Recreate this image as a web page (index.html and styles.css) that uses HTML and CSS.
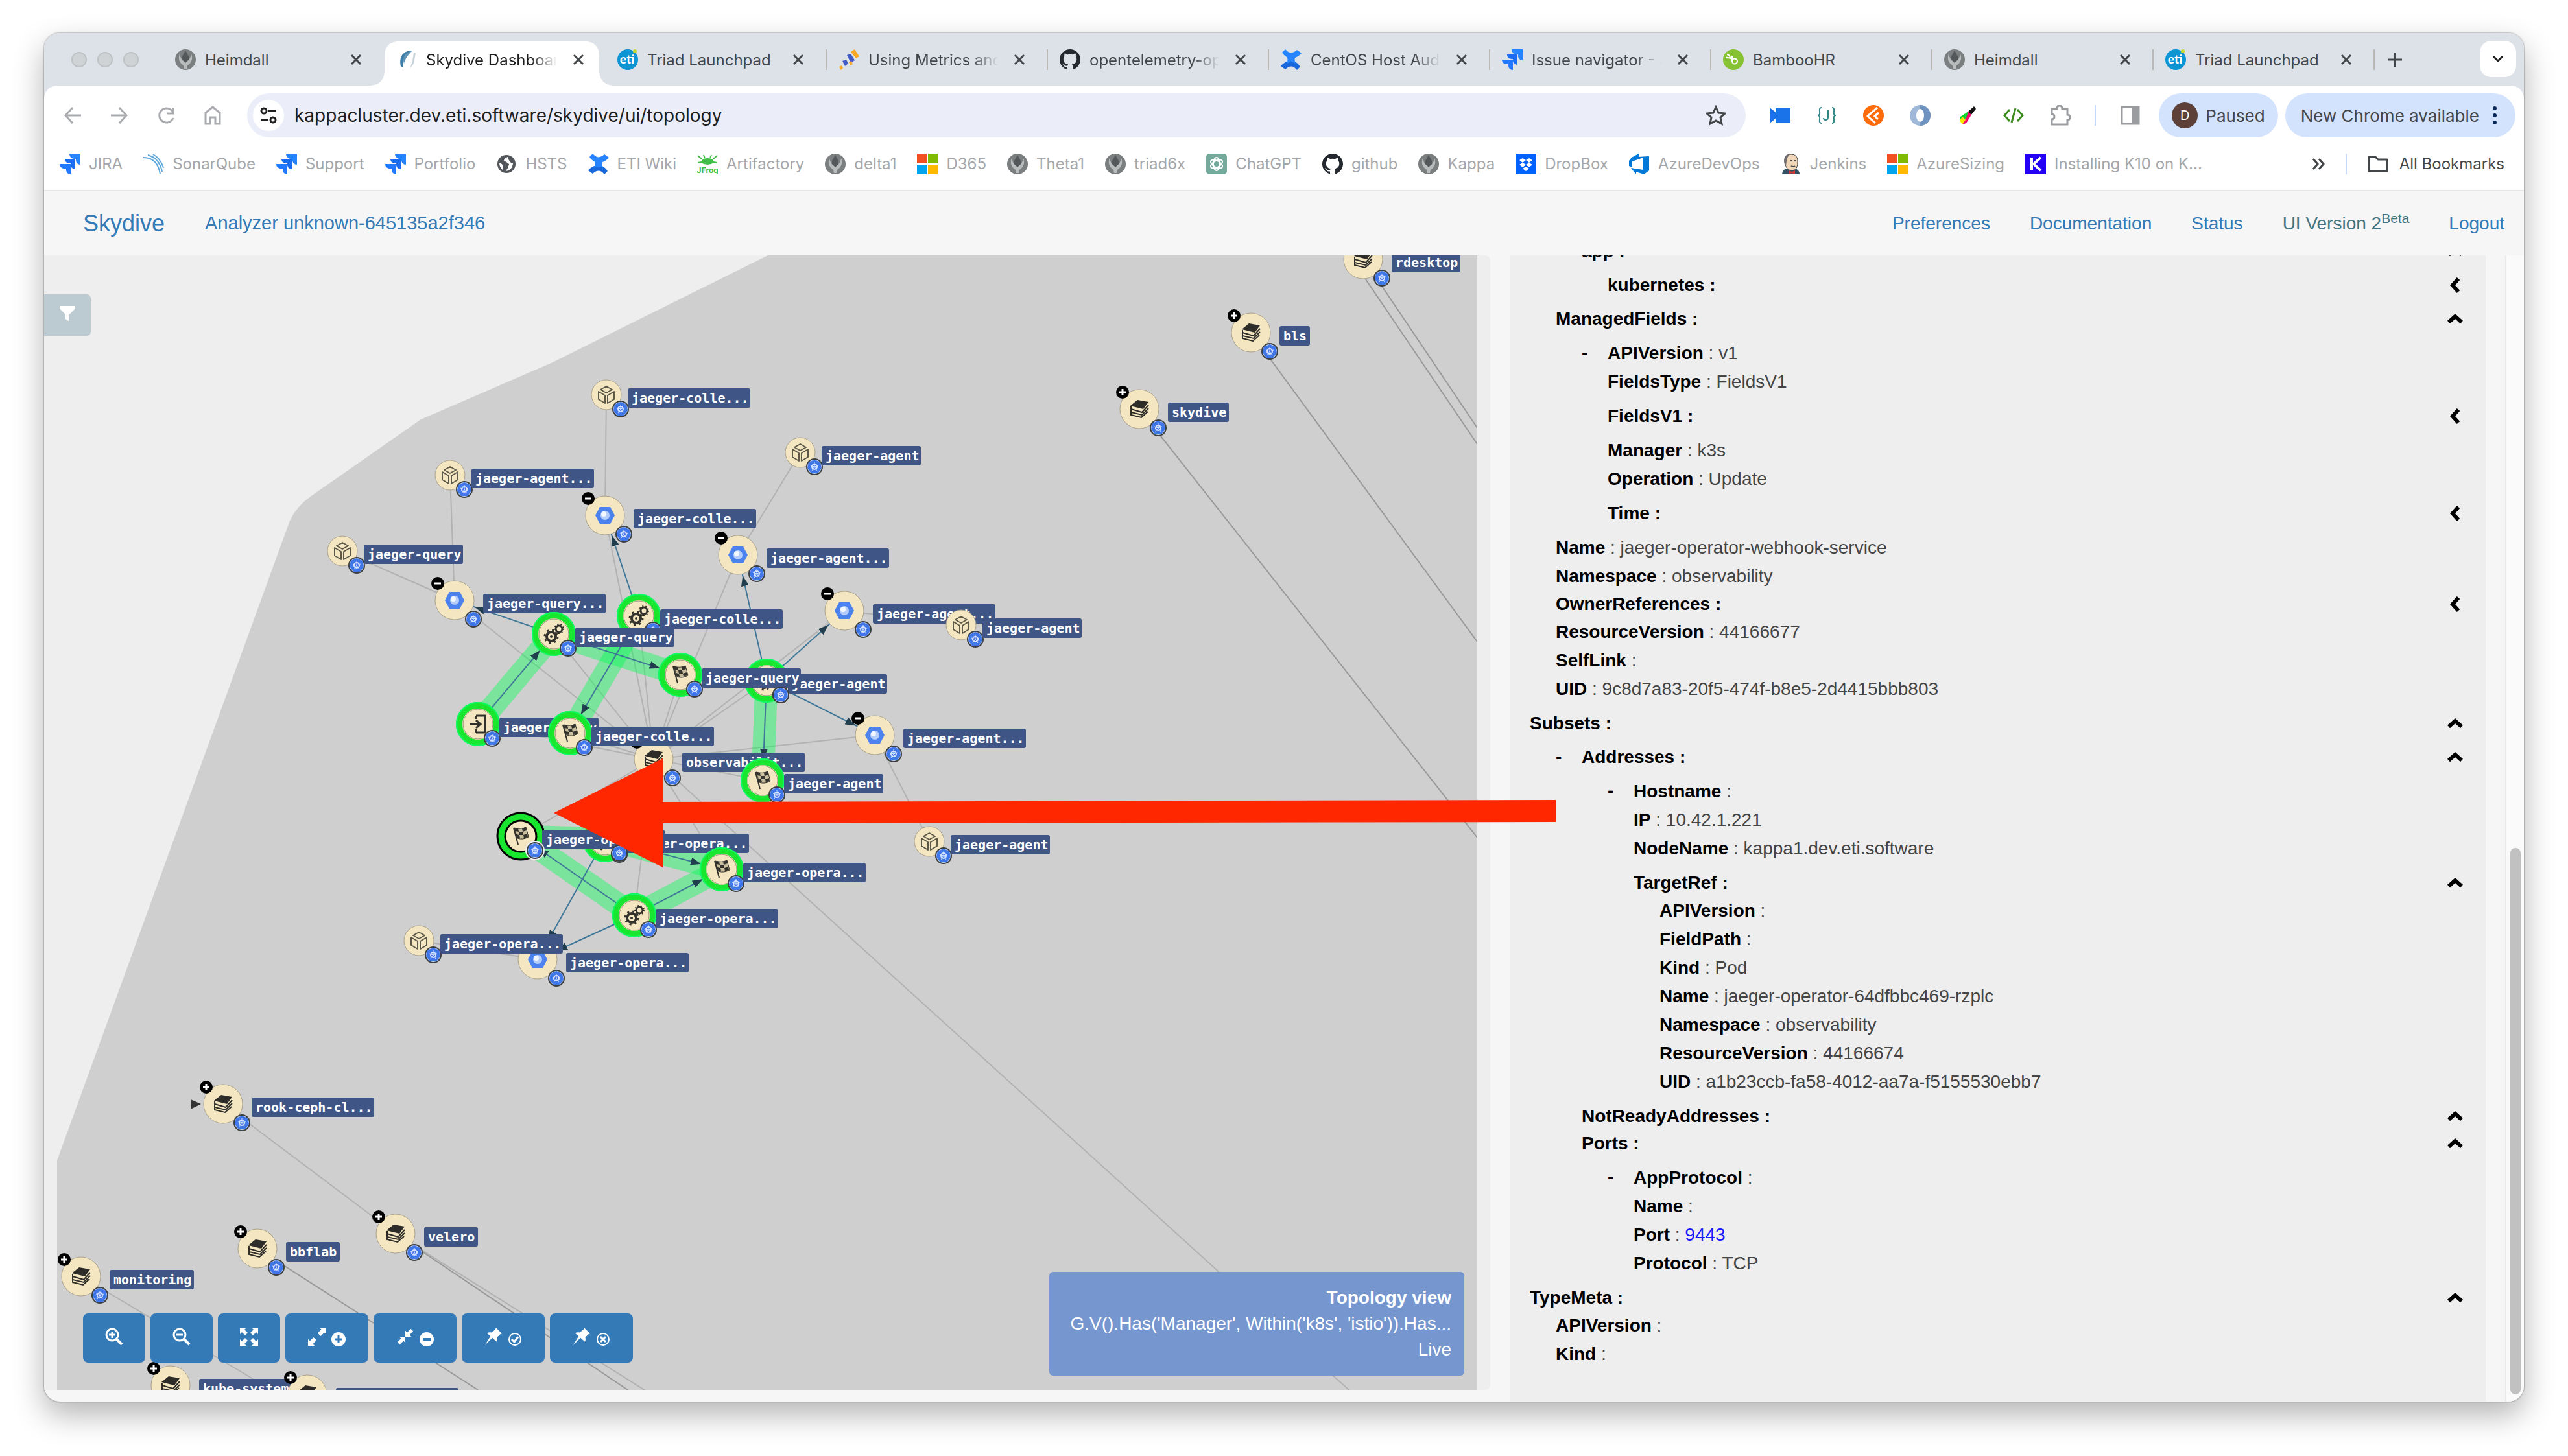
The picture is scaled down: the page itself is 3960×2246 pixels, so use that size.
FILE: index.html
```html
<!DOCTYPE html>
<html lang="en">
<head>
<meta charset="utf-8">
<title>Skydive Dashboard</title>
<link rel="stylesheet" href="styles.css">
</head>
<body>
<svg class="defs" aria-hidden="true">
  <defs>
    <symbol id="i-shield" viewBox="0 0 32 32"><circle cx="16" cy="16" r="16" fill="#7c7f80"/><path d="M16 2l5 9v6l-5 6-5-6v-6z" fill="#54585a"/><path d="M7 7c-3 8 0 14 6 18l1 5h4l1-5c6-4 9-10 6-18-1 6-3 9-6 11l-3 3-3-3c-3-2-5-5-6-11z" fill="#b9bcbd"/></symbol>
    <symbol id="i-jira" viewBox="0 0 32 32"><path d="M15 0h17v17c-4 0-7-3-7-7V8h-3c-4 0-7-4-7-8z" fill="#2684ff"/><path d="M8 8h16v16c-4 0-7-3-7-7v-2h-2c-4 0-7-3-7-7z" fill="#1a6cf0"/><path d="M0 16h17v16c-4 0-7-3-7-7v-2H7c-4 0-7-3-7-7z" fill="#1f78ff"/></symbol>
    <symbol id="i-conf" viewBox="0 0 32 32"><path d="M2 5l5-5c6 7 11 7 18 1l7 5C22 17 10 17 2 5z" fill="#2684ff"/><path d="M30 27l-5 5c-6-7-11-7-18-1l-7-5C10 15 22 15 30 27z" fill="#1868db"/><path d="M9 10q7 4 14 0-3 6 0 12-7-4-14 0 3-6 0-12z" fill="#2684ff"/></symbol>
    <symbol id="i-eti" viewBox="0 0 32 32"><circle cx="16" cy="16" r="16" fill="#0b95d3"/><circle cx="27" cy="3" r="3" fill="#c4d82e"/><text x="15" y="22" text-anchor="middle" font-family="Lato, sans-serif" font-weight="700" font-size="19" fill="#fff">eti</text></symbol>
    <symbol id="i-github" viewBox="0 0 16 16"><path fill="#24292f" d="M8 0C3.58 0 0 3.58 0 8c0 3.54 2.29 6.53 5.47 7.59.4.07.55-.17.55-.38v-1.49c-2.01.37-2.53-.49-2.69-.94-.09-.23-.48-.94-.82-1.13-.28-.15-.68-.52-.01-.53.63-.01 1.08.58 1.23.82.72 1.21 1.87.87 2.33.66.07-.52.28-.87.51-1.07-1.78-.2-3.64-.89-3.64-3.95 0-.87.31-1.59.82-2.15-.08-.2-.36-1.02.08-2.12 0 0 .67-.21 2.2.82a7.6 7.6 0 014 0c1.53-1.04 2.2-.82 2.2-.82.44 1.1.16 1.92.08 2.12.51.56.82 1.27.82 2.15 0 3.07-1.87 3.75-3.65 3.95.29.25.54.73.54 1.48v2.2c0 .21.15.46.55.38A8 8 0 0016 8c0-4.42-3.58-8-8-8z"/></symbol>
    <symbol id="i-ms" viewBox="0 0 32 32"><path fill="#f25022" d="M0 0h15v15H0z"/><path fill="#7fba00" d="M17 0h15v15H17z"/><path fill="#00a4ef" d="M0 17h15v15H0z"/><path fill="#ffb900" d="M17 17h15v15H17z"/></symbol>
    <symbol id="i-close" viewBox="0 0 18 18"><path d="M2 2l14 14M16 2L2 16" stroke="#44474a" stroke-width="3" fill="none"/></symbol>
    <symbol id="i-chev" viewBox="0 0 26 18"><path d="M3 14L13 5l10 9" fill="none" stroke="#000" stroke-width="6"/></symbol>

    <g id="badge"><circle r="13" fill="#3c4043"/><circle r="11" fill="#c6d4f5"/><path d="M0-11L9-7 11 2 5 10h-10l-6-8 2-9z" fill="#3f76e8"/><circle r="4" fill="none" stroke="#d5e1ff" stroke-width="2"/><path d="M0-7V0M-6-2L0 0 6-2M-4 6L0 0 4 6" fill="none" stroke="#d5e1ff" stroke-width="1"/></g>
    <g id="disc"><circle r="30" fill="#f3e6c0" stroke="#a9a18b" stroke-width="1"/></g>
    <g id="minus"><circle cx="-26" cy="-26" r="10"/><path d="M-31-26h10" stroke="#fff" stroke-width="3"/></g>
    <g id="plus"><circle cx="-26" cy="-26" r="10"/><path d="M-31-26h10M-26-31v10" stroke="#fff" stroke-width="3"/></g>
    <g id="pod"><circle r="23" fill="#f3e6c0" stroke="#a9a18b" stroke-width="1"/><path d="M0-13l9 5-9 5-9-5zM-12-5l10 6v12l-10-6zM12-5L2 1v12l10-6z" fill="none" stroke="#5d5949" stroke-width="2" stroke-linejoin="round"/><use href="#badge" x="22" y="22"/></g>
    <g id="deploy"><use href="#disc"/><path d="M-8-13H8l7 13-7 13H-8l-7-13z" fill="#4b82ee"/><circle r="7" fill="#b5cdfb"/><circle cx="-2" cy="-2" r="4" fill="#f2f7ff"/><use href="#minus"/><use href="#badge" x="29" y="29"/></g>
    <g id="layers"><path d="M-3-14l17 3-8 11-20-5z" fill="#2d2c28"/><path d="M-13-4l0 4 17 5 10-11M-13 1l0 4 17 4 10-10M-13 6l0 3 16 4 10-9" fill="none" stroke="#2d2c28" stroke-width="2"/></g>
    <g id="ns"><use href="#disc"/><use href="#layers"/><use href="#plus"/><use href="#badge" x="29" y="29"/></g>
    <g id="ring"><circle r="29" fill="#f3e6c0" stroke="#19e62f" stroke-width="10"/><circle r="33" fill="none" stroke="#0dfb63" stroke-width="2"/><circle r="23" fill="none" stroke="#9a9478" stroke-width="1"/></g>
    <g id="gears"><use href="#ring"/><g fill="none" stroke="#33322c"><circle cx="-4" cy="4" r="7" stroke-width="4"/><circle cx="-4" cy="4" r="10" stroke-width="3" stroke-dasharray="3 5"/><circle cx="8" cy="-8" r="5" stroke-width="3"/><circle cx="8" cy="-8" r="7" stroke-width="2" stroke-dasharray="2 3"/></g><circle cx="-4" cy="4" r="2" fill="#33322c"/><use href="#badge" x="22" y="22"/></g>
    <g id="checks"><path d="M-11-13l7 26" stroke="#33322c" stroke-width="2"/><path d="M-10-13q10 3 18-1l4 15q-9 5-17 2z" fill="#c9bf9f" stroke="#33322c" stroke-width="1"/><path d="M-10-13l6 1 1 5-6-1zM2-12l6-2 1 5-6 2zM-3-7l6 0 1 5-6 0zM-7-3l5 1 1 5-6-1zM4-2l6-2 1 5-6 2z" fill="#33322c"/></g>
    <g id="flag"><use href="#ring"/><use href="#checks"/><use href="#badge" x="22" y="22"/></g>
    <g id="flagsel"><circle r="30" fill="#f3e6c0" stroke="#19e62f" stroke-width="12"/><circle r="36" fill="none" stroke="#000" stroke-width="3"/><circle r="24" fill="none" stroke="#000" stroke-width="3"/><use href="#checks"/></g>
    <g id="login"><use href="#ring"/><path d="M-3-13H11V13H-3M-3-13v5M-3 13v-5M-12 0H3M-3-6l7 6-7 6" fill="none" stroke="#33322c" stroke-width="3"/><use href="#badge" x="22" y="22"/></g>
    <marker id="arrow" markerUnits="userSpaceOnUse" markerWidth="60" markerHeight="12" refX="49" refY="6" orient="auto"><path d="M0 0l16 6-16 6z" fill="#1f3d4d"/></marker>
    <clipPath id="canvas"><rect x="88" y="394" width="2190" height="1750"/></clipPath>
  </defs>
</svg>

<div class="window">
  <header class="chrome">
    <div class="strip">
      <div class="lights"><span></span><span></span><span></span></div>
      <nav class="tabs" aria-label="Tabs">
        <div class="tab"><svg class="fav"><use href="#i-shield"/></svg><span class="tab-title">Heimdall</span><button class="close" aria-label="Close"><svg><use href="#i-close"/></svg></button></div>
        <div class="tab tab-active"><svg class="fav" viewBox="0 0 32 32"><path d="M25 2C10 2 4 12 7 26l4 3c-2-9 1-19 14-27z" fill="#3f7ea8"/><path d="M25 2C14 4 9 13 12 22c2-8 6-13 13-20z" fill="#5e93b6"/><path d="M27 5l3 1-3 16-6 8c3-8 5-15 6-25z" fill="#c9d3da"/></svg><span class="tab-title fade">Skydive Dashboard</span><button class="close" aria-label="Close"><svg><use href="#i-close"/></svg></button></div>
        <div class="tab divided"><svg class="fav"><use href="#i-eti"/></svg><span class="tab-title">Triad Launchpad</span><button class="close" aria-label="Close"><svg><use href="#i-close"/></svg></button></div>
        <div class="tab divided"><svg class="fav" viewBox="0 0 32 32"><path d="M19 4l6-4 7 11-5 3z" fill="#f9a825"/><path d="M13 9l6-2 6 10-6 4zM6 18l6-2 3 6-5 4z" fill="#425cc7"/><path d="M16 20l4-2 2 5-4 2zM1 27l4-2 2 4-3 3z" fill="#f9a825"/></svg><span class="tab-title fade">Using Metrics and Traces</span><button class="close" aria-label="Close"><svg><use href="#i-close"/></svg></button></div>
        <div class="tab divided"><svg class="fav"><use href="#i-github"/></svg><span class="tab-title fade">opentelemetry-operator</span><button class="close" aria-label="Close"><svg><use href="#i-close"/></svg></button></div>
        <div class="tab divided"><svg class="fav"><use href="#i-conf"/></svg><span class="tab-title fade">CentOS Host Audit</span><button class="close" aria-label="Close"><svg><use href="#i-close"/></svg></button></div>
        <div class="tab divided"><svg class="fav"><use href="#i-jira"/></svg><span class="tab-title fade">Issue navigator - Jira</span><button class="close" aria-label="Close"><svg><use href="#i-close"/></svg></button></div>
        <div class="tab divided"><svg class="fav" viewBox="0 0 32 32"><circle cx="16" cy="16" r="16" fill="#86c232"/><path d="M14 10v9M14 19a4 4 0 108-1 4 4 0 00-8 1M6 8q5 0 5 7M10 13q-4 1-5-1" fill="none" stroke="#fff" stroke-width="2"/></svg><span class="tab-title">BambooHR</span><button class="close" aria-label="Close"><svg><use href="#i-close"/></svg></button></div>
        <div class="tab divided"><svg class="fav"><use href="#i-shield"/></svg><span class="tab-title">Heimdall</span><button class="close" aria-label="Close"><svg><use href="#i-close"/></svg></button></div>
        <div class="tab divided"><svg class="fav"><use href="#i-eti"/></svg><span class="tab-title">Triad Launchpad</span><button class="close" aria-label="Close"><svg><use href="#i-close"/></svg></button></div>
      </nav>
      <button class="newtab" aria-label="New tab"><svg viewBox="0 0 22 22"><path d="M11 0v22M0 11h22" stroke="#44474a" stroke-width="3"/></svg></button>
      <button class="tabsearch" aria-label="Search tabs"><svg viewBox="0 0 18 12"><path d="M2 2l7 7 7-7" fill="none" stroke="#1f1f1f" stroke-width="3"/></svg></button>
    </div>

    <div class="bars">
      <div class="toolbar">
        <div class="icons">
          <button class="ico" aria-label="Back"><svg viewBox="0 0 32 32"><path d="M29 16H5M16 4L5 16l11 12" fill="none" stroke="#a9abae" stroke-width="3"/></svg></button>
          <button class="ico" aria-label="Forward"><svg viewBox="0 0 32 32"><path d="M3 16h24M16 4l11 12-11 12" fill="none" stroke="#a9abae" stroke-width="3"/></svg></button>
          <button class="ico" aria-label="Reload"><svg viewBox="0 0 32 32"><path d="M27 12A11 11 0 1027 20M27 4v9h-9" fill="none" stroke="#a9abae" stroke-width="3"/></svg></button>
          <button class="ico" aria-label="Home"><svg viewBox="0 0 32 32"><path d="M5 12L16 3l11 9v17h-7V19h-8v10H5z" fill="none" stroke="#a9abae" stroke-width="3"/></svg></button>
        </div>
        <div class="omnibox">
          <button class="siteinfo" aria-label="Site information"><svg viewBox="0 0 28 28"><g fill="none" stroke="#1f1f1f" stroke-width="3"><circle cx="7" cy="7" r="4"/><path d="M14 7h12M2 21h12"/><circle cx="21" cy="21" r="4"/></g></svg></button>
          <input class="url" type="text" aria-label="Address" value="kappacluster.dev.eti.software/skydive/ui/topology">
          <button class="ico" aria-label="Bookmark"><svg viewBox="0 0 32 32"><path d="M16 3l4 9 10 1-7 6 2 10-9-5-9 5 2-10-7-6 10-1z" fill="none" stroke="#44474a" stroke-width="3"/></svg></button>
        </div>
        <div class="icons">
          <button class="ico" aria-label="Recorder"><svg viewBox="0 0 32 32"><path d="M0 4l9 7V5h23v22H9v-6l-9 7z" fill="#1a73e8"/></svg></button>
          <button class="ico" aria-label="JSON"><svg viewBox="0 0 32 32"><path d="M8 4Q4 4 5 10t-3 6q4 0 3 6t3 6M24 4q4 0 3 6t3 6q-4 0-3 6t-3 6M18 8v11q0 4-4 4-3 0-3-3" fill="none" stroke="#2f8585" stroke-width="2"/></svg></button>
          <button class="ico" aria-label="Postman"><svg viewBox="0 0 32 32"><circle cx="16" cy="16" r="16" fill="#ff6c0c"/><path d="M22 4L7 17l12 11M24 12l-6 5 5 5" fill="none" stroke="#fff" stroke-width="3"/></svg></button>
          <button class="ico" aria-label="Octo"><svg viewBox="0 0 32 32"><circle cx="16" cy="16" r="16" fill="#9fb8d8"/><path d="M16 0a16 16 0 010 32z" fill="#6f93c0"/><ellipse cx="16" cy="16" rx="6" ry="10" fill="#fff"/></svg></button>
          <button class="ico" aria-label="Color picker"><svg viewBox="0 0 32 32"><path d="M27 2l3 4-8 10-6-4z" fill="#111"/><path d="M18 10l5 5-8 13-6 2z" fill="#f30a6a"/><path d="M18 10L6 18l-1 6 10-4z" fill="#0bd22c"/><path d="M5 24l4-6 5 5-5 7z" fill="#ffe600"/></svg></button>
          <button class="ico" aria-label="Code"><svg viewBox="0 0 32 32"><path d="M10 7l-8 9 8 9M22 7l8 9-8 9M19 5l-6 22" fill="none" stroke="#3a8a1d" stroke-width="3"/></svg></button>
          <button class="ico" aria-label="Extensions"><svg viewBox="0 0 32 32"><path d="M3 6h8q0-5 4-5t4 5h8v9q4 0 4 4t-4 4v7H3v-8q4 0 4-4t-4-4z" fill="none" stroke="#9a9c9f" stroke-width="3"/></svg></button>
        </div>
        <span class="vsep"></span>
        <button class="ico" aria-label="Side panel"><svg viewBox="0 0 32 32"><path d="M3 3h26v26H3z" fill="none" stroke="#9a9c9f" stroke-width="3"/><path d="M19 3h11v26H19z" fill="#9a9c9f"/></svg></button>
        <div class="pills">
          <button class="pill"><span class="avatar">D</span>Paused</button>
          <button class="pill pill-wide">New Chrome available<svg class="dots" viewBox="0 0 8 32"><circle cx="4" cy="5" r="3"/><circle cx="4" cy="16" r="3"/><circle cx="4" cy="27" r="3"/></svg></button>
        </div>
      </div>
      <nav class="bookmarks" aria-label="Bookmarks">
        <a href="#"><svg><use href="#i-jira"/></svg>JIRA</a>
        <a href="#"><svg viewBox="0 0 32 32"><path d="M0 6q22 0 26 26M7 2q18 5 22 26M15 1q12 7 16 21" fill="none" stroke="#5ba7dc" stroke-width="2"/></svg>SonarQube</a>
        <a href="#"><svg><use href="#i-jira"/></svg>Support</a>
        <a href="#"><svg><use href="#i-jira"/></svg>Portfolio</a>
        <a href="#"><svg viewBox="0 0 32 32"><circle cx="16" cy="16" r="14" fill="#53575b"/><path d="M18 5q-6 2-6 6 5 2 8 5-1 6-5 11 10-1 11-12-3 0-5-3t-3-7zM5 14q4 1 6 5-1 3-1 6-5-4-5-11z" fill="#fff"/></svg>HSTS</a>
        <a href="#"><svg><use href="#i-conf"/></svg>ETI Wiki</a>
        <a href="#"><svg viewBox="0 0 32 32"><path d="M1 3l6 5M31 3l-6 5M10 2l2 5M22 2l-2 5M1 14l6-1M31 14l-6-1" stroke="#40be46" stroke-width="2"/><path d="M6 14q0-7 10-7t10 7q-10 6-20 0z" fill="#40be46"/><text x="16" y="30" text-anchor="middle" font-family="Roboto, sans-serif" font-weight="700" font-size="13" fill="#40be46">JFrog</text></svg>Artifactory</a>
        <a href="#"><svg><use href="#i-shield"/></svg>delta1</a>
        <a href="#"><svg><use href="#i-ms"/></svg>D365</a>
        <a href="#"><svg><use href="#i-shield"/></svg>Theta1</a>
        <a href="#"><svg><use href="#i-shield"/></svg>triad6x</a>
        <a href="#"><svg viewBox="0 0 32 32"><rect width="32" height="32" rx="5" fill="#74aa9c"/><g fill="none" stroke="#fff" stroke-width="2"><ellipse cx="16" cy="16" rx="5" ry="10"/><ellipse cx="16" cy="16" rx="5" ry="10" transform="rotate(60 16 16)"/><ellipse cx="16" cy="16" rx="5" ry="10" transform="rotate(120 16 16)"/></g></svg>ChatGPT</a>
        <a href="#"><svg><use href="#i-github"/></svg>github</a>
        <a href="#"><svg><use href="#i-shield"/></svg>Kappa</a>
        <a href="#"><svg viewBox="0 0 32 32"><path d="M0 0h32v32H0z" fill="#0061fe"/><path d="M11 7l5 3-5 4-5-4zM21 7l5 3-5 4-5-4zM11 14l5 3-5 4-5-4zM21 14l5 3-5 4-5-4zM16 20l5 3-5 4-5-4z" fill="#fff"/></svg>DropBox</a>
        <a href="#"><svg viewBox="0 0 32 32"><path d="M0 11l4-5 11-6v5l16-1v22l-8 6-12-4v4L3 22l19 3V6L5 12v9l-5-2z" fill="#0078d7"/></svg>AzureDevOps</a>
        <a href="#"><svg viewBox="0 0 32 32"><path d="M2 32q0-8 8-9h12q7 2 7 9z" fill="#335061"/><path d="M6 11q0-10 10-10t10 10q1 15-9 15T6 11z" fill="#f0d6b7" stroke="#4a4a4a" stroke-width="1"/><path d="M5 12Q5 0 16 0q-6 3-7 11l-1 8q-3-3-3-7z" fill="#6d6b6d"/><path d="M13 26l4 2 5-2v6l-5-2-4 2z" fill="#d33833"/><path d="M15 11h3M21 11h3M16 19q4 2 6 0" stroke="#4a4a4a" stroke-width="2" fill="none"/></svg>Jenkins</a>
        <a href="#"><svg><use href="#i-ms"/></svg>AzureSizing</a>
        <a href="#"><svg viewBox="0 0 32 32"><path d="M0 0h32v32H0z" fill="#2400f5"/><path d="M10 6v20M24 6L13 16l11 10" fill="none" stroke="#fff" stroke-width="4"/></svg>Installing K10 on K...</a>
        <span class="spacer"></span>
        <button class="more" aria-label="More bookmarks"><svg viewBox="0 0 20 18"><path d="M2 1l7 8-7 8M11 1l7 8-7 8" fill="none" stroke="#44474a" stroke-width="3"/></svg></button>
        <span class="vsep"></span>
        <a class="all" href="#"><svg viewBox="0 0 32 32"><path d="M2 5h10l4 4h14v18H2z" fill="none" stroke="#44474a" stroke-width="3" stroke-linejoin="round"/></svg>All Bookmarks</a>
      </nav>
    </div>
  </header>

  <header class="appbar">
    <a class="brand" href="#">Skydive</a>
    <a class="analyzer" href="#">Analyzer unknown-645135a2f346</a>
    <nav class="menu" aria-label="Main">
      <a href="#">Preferences</a>
      <a href="#">Documentation</a>
      <a href="#">Status</a>
      <a class="beta" href="#">UI Version 2<sup>Beta</sup></a>
      <a href="#">Logout</a>
    </nav>
  </header>

  <main class="content">
    <section class="graph" aria-label="Topology">
      <svg class="canvas" viewBox="68 394 2230 1750" preserveAspectRatio="xMinYMin slice">
        <g clip-path="url(#canvas)">
          <path d="M1184 394L850 560 649 647 480 765Q458 780 447 803L88 1790V2144H2278V394Z" fill="#cfcfcf"/>
          <g class="far">
            <path d="M1757 631L2278 1292M1929 513L2278 990M2106 431L2278 685M2130 440L2278 660M397 1926L737 2144M610 1903L968 2144"/>
          </g>
          <g class="near">
            <path d="M344 1703L610 1903L1000 2148M125 1969L390 2127M1008 1171L2080 2144"/>
            <path d="M935 609L933 795M694 733L701 926M528 850L701 926M1234 698L1138 856M1482 964L1302 942M1433 1298L1349 1134M646 1451L829 1480"/>
            <path d="M1008 1171L933 795M1008 1171L1138 856M1008 1171L701 926M1008 1171L854 978M1008 1171L985 950M1008 1171L1049 1041M1008 1171L1182 1050M1008 1171L1302 942M1008 1171L1349 1134M1008 1171L1176 1204M1008 1171L879 1131M1008 1171L737 1117M1008 1171L803 1290M1008 1171L933 1294M1008 1171L1113 1341M1008 1171L978 1412"/>
          </g>
          <path d="M294 1696l16 7-16 8z" fill="#333"/>
          <g class="band">
            <path d="M737 1117L854 978"/><path d="M854 978L1049 1041"/><path d="M985 950L879 1131"/><path d="M1182 1050L1176 1204"/>
            <path d="M978 1412L803 1290"/><path d="M978 1412L1113 1341"/><path d="M933 1294L1113 1341"/><path d="M803 1290L933 1294"/>
          </g>
          <g class="link">
            <path d="M854 978L701 926"/><path d="M737 1117L854 978"/><path d="M854 978L1049 1041"/><path d="M985 950L933 795"/><path d="M985 950L879 1131"/>
            <path d="M1182 1050L1138 856"/><path d="M1182 1050L1302 942"/><path d="M1182 1050L1349 1134"/><path d="M1182 1050L1176 1204"/>
            <path d="M978 1412L803 1290"/><path d="M978 1412L1113 1341"/><path d="M933 1294L1113 1341"/><path d="M933 1294L829 1480"/><path d="M978 1412L829 1480"/>
          </g>
          <g class="nodes">
            <g transform="translate(2102 400)"><use href="#ns"/><rect x="44" y="-10" width="106" height="30" rx="3"/><text x="50" y="12">rdesktop</text></g>
            <g transform="translate(1929 513)"><use href="#ns"/><rect x="44" y="-10" width="47" height="30" rx="3"/><text x="50" y="12">bls</text></g>
            <g transform="translate(1757 631)"><use href="#ns"/><rect x="44" y="-10" width="94" height="30" rx="3"/><text x="50" y="12">skydive</text></g>
            <g transform="translate(344 1703)"><use href="#ns"/><rect x="44" y="-10" width="189" height="30" rx="3"/><text x="50" y="12">rook-ceph-cl...</text></g>
            <g transform="translate(610 1903)"><use href="#ns"/><rect x="44" y="-10" width="83" height="30" rx="3"/><text x="50" y="12">velero</text></g>
            <g transform="translate(397 1926)"><use href="#ns"/><rect x="44" y="-10" width="83" height="30" rx="3"/><text x="50" y="12">bbflab</text></g>
            <g transform="translate(125 1969)"><use href="#ns"/><rect x="44" y="-10" width="130" height="30" rx="3"/><text x="50" y="12">monitoring</text></g>
            <g transform="translate(263 2137)"><use href="#ns"/><rect x="44" y="-10" width="142" height="30" rx="3"/><text x="50" y="12">kube-system</text></g>
            <g transform="translate(474 2151)"><use href="#ns"/><rect x="44" y="-10" width="189" height="30" rx="3"/></g>
            <g transform="translate(935 609)"><use href="#pod"/><rect x="33" y="-10" width="189" height="30" rx="3"/><text x="39" y="12">jaeger-colle...</text></g>
            <g transform="translate(694 733)"><use href="#pod"/><rect x="33" y="-10" width="189" height="30" rx="3"/><text x="39" y="12">jaeger-agent...</text></g>
            <g transform="translate(528 850)"><use href="#pod"/><rect x="33" y="-10" width="153" height="30" rx="3"/><text x="39" y="12">jaeger-query</text></g>
            <g transform="translate(1234 698)"><use href="#pod"/><rect x="33" y="-10" width="153" height="30" rx="3"/><text x="39" y="12">jaeger-agent</text></g>
            <g transform="translate(1433 1298)"><use href="#pod"/><rect x="33" y="-10" width="153" height="30" rx="3"/><text x="39" y="12">jaeger-agent</text></g>
            <g transform="translate(933 795)"><use href="#deploy"/><rect x="44" y="-10" width="189" height="30" rx="3"/><text x="50" y="12">jaeger-colle...</text></g>
            <g transform="translate(701 926)"><use href="#deploy"/><rect x="44" y="-10" width="189" height="30" rx="3"/><text x="50" y="12">jaeger-query...</text></g>
            <g transform="translate(1138 856)"><use href="#deploy"/><rect x="44" y="-10" width="189" height="30" rx="3"/><text x="50" y="12">jaeger-agent...</text></g>
            <g transform="translate(1302 942)"><use href="#deploy"/><rect x="44" y="-10" width="189" height="30" rx="3"/><text x="50" y="12">jaeger-agent...</text></g>
            <g transform="translate(1482 964)"><use href="#pod"/><rect x="33" y="-10" width="153" height="30" rx="3"/><text x="39" y="12">jaeger-agent</text></g>
            <g transform="translate(1349 1134)"><use href="#deploy"/><rect x="44" y="-10" width="189" height="30" rx="3"/><text x="50" y="12">jaeger-agent...</text></g>
            <g transform="translate(829 1480)"><use href="#deploy"/><rect x="44" y="-10" width="189" height="30" rx="3"/><text x="50" y="12">jaeger-opera...</text></g>
            <g transform="translate(646 1451)"><use href="#pod"/><rect x="33" y="-10" width="189" height="30" rx="3"/><text x="39" y="12">jaeger-opera...</text></g>
            <g transform="translate(1008 1171)"><use href="#disc"/><use href="#layers"/><use href="#minus"/><use href="#badge" x="29" y="29"/><rect x="44" y="-10" width="189" height="30" rx="3"/><text x="50" y="12">observabilit...</text></g>
            <g transform="translate(737 1117)"><use href="#login"/><rect x="33" y="-10" width="153" height="30" rx="3"/><text x="39" y="12">jaeger-query</text></g>
            <g transform="translate(879 1131)"><use href="#flag"/><rect x="33" y="-10" width="189" height="30" rx="3"/><text x="39" y="12">jaeger-colle...</text></g>
            <g transform="translate(985 950)"><use href="#gears"/><rect x="33" y="-10" width="189" height="30" rx="3"/><text x="39" y="12">jaeger-colle...</text></g>
            <g transform="translate(854 978)"><use href="#gears"/><rect x="33" y="-10" width="153" height="30" rx="3"/><text x="39" y="12">jaeger-query</text></g>
            <g transform="translate(1182 1050)"><use href="#gears"/><rect x="33" y="-10" width="153" height="30" rx="3"/><text x="39" y="12">jaeger-agent</text></g>
            <g transform="translate(1049 1041)"><use href="#flag"/><rect x="33" y="-10" width="153" height="30" rx="3"/><text x="39" y="12">jaeger-query</text></g>
            <use href="#badge" x="1204" y="1072"/>
            <g transform="translate(1176 1204)"><use href="#flag"/><rect x="33" y="-10" width="153" height="30" rx="3"/><text x="39" y="12">jaeger-agent</text></g>
            <g transform="translate(933 1296)"><use href="#gears"/><rect x="33" y="-10" width="189" height="30" rx="3"/><text x="39" y="12">jaeger-opera...</text></g>
            <g transform="translate(803 1290)"><use href="#flagsel"/><rect x="33" y="-10" width="189" height="30" rx="3"/><text x="39" y="12">jaeger-opera...</text><circle cx="22" cy="22" r="15" fill="#f0f0f0"/><use href="#badge" x="22" y="22"/></g>
            <use href="#badge" x="955" y="1316"/>
            <g transform="translate(1113 1341)"><use href="#flag"/><rect x="33" y="-10" width="189" height="30" rx="3"/><text x="39" y="12">jaeger-opera...</text></g>
            <g transform="translate(978 1412)"><use href="#gears"/><rect x="33" y="-10" width="189" height="30" rx="3"/><text x="39" y="12">jaeger-opera...</text></g>
          </g>
        </g>
      </svg>
      <button class="filter" aria-label="Filter"><svg viewBox="0 0 26 26"><path d="M1 1h24v4l-9 9v11l-6-4v-7L1 5z" fill="#fff"/></svg></button>
      <div class="tools">
        <button aria-label="Zoom in"><svg viewBox="0 0 28 28"><circle cx="11" cy="11" r="9" fill="none" stroke="#fff" stroke-width="3"/><path d="M11 6v10M6 11h10" stroke="#fff" stroke-width="3"/><path d="M18 18l8 8" stroke="#fff" stroke-width="4"/></svg></button>
        <button aria-label="Zoom out"><svg viewBox="0 0 28 28"><circle cx="11" cy="11" r="9" fill="none" stroke="#fff" stroke-width="3"/><path d="M6 11h10" stroke="#fff" stroke-width="3"/><path d="M18 18l8 8" stroke="#fff" stroke-width="4"/></svg></button>
        <button aria-label="Fit"><svg viewBox="0 0 28 28"><path d="M0 0h10L7 3l5 5-4 4-5-5-3 3zM28 0v10l-3-3-5 5-4-4 5-5-3-3zM0 28V18l3 3 5-5 4 4-5 5 3 3zM28 28H18l3-3-5-5 4-4 5 5 3-3z" fill="#fff"/></svg></button>
        <button class="wide" aria-label="Expand all"><svg viewBox="0 0 30 30"><path d="M30 0v11l-3-3-6 6-5-5 6-6-3-3zM0 30V19l3 3 6-6 5 5-6 6 3 3z" fill="#fff"/></svg><svg class="sub" viewBox="0 0 22 22"><circle cx="11" cy="11" r="11" fill="#fff"/><path d="M11 5v12M5 11h12" stroke="#337ab7" stroke-width="3"/></svg></button>
        <button class="wide" aria-label="Collapse all"><svg viewBox="0 0 30 30"><path d="M15 15V5l3 3 6-6 4 4-6 6 3 3zM15 15v10l-3-3-6 6-4-4 6-6-3-3z" fill="#fff"/></svg><svg class="sub" viewBox="0 0 22 22"><circle cx="11" cy="11" r="11" fill="#fff"/><path d="M5 11h12" stroke="#337ab7" stroke-width="4"/></svg></button>
        <button class="wide" aria-label="Pin"><svg viewBox="0 0 30 30"><path d="M19 0l10 10-3 1-5 5q1 5-1 7L13 17 1 29l9-15-6-5q3-2 8-1l6-5z" fill="#fff"/></svg><svg class="sub" viewBox="0 0 22 22"><circle cx="11" cy="11" r="9" fill="none" stroke="#fff" stroke-width="2"/><path d="M6 11l4 4 6-8" fill="none" stroke="#fff" stroke-width="3"/></svg></button>
        <button class="wide" aria-label="Unpin"><svg viewBox="0 0 30 30"><path d="M19 0l10 10-3 1-5 5q1 5-1 7L13 17 1 29l9-15-6-5q3-2 8-1l6-5z" fill="#fff"/></svg><svg class="sub" viewBox="0 0 22 22"><circle cx="11" cy="11" r="9" fill="none" stroke="#fff" stroke-width="2"/><path d="M7 7l8 8M15 7l-8 8" fill="none" stroke="#fff" stroke-width="3"/></svg></button>
      </div>
      <div class="info"><strong>Topology view</strong><span>G.V().Has('Manager', Within('k8s', 'istio')).Has...</span><span>Live</span></div>
    </section>

    <aside class="panel" aria-label="Node details">
      <div class="tree">
        <div class="nest">
          <div class="nest">
            <details open><summary>app :<svg><use href="#i-chev"/></svg></summary>
              <div class="nest"><details class="spaced"><summary>kubernetes :<svg><use href="#i-chev"/></svg></summary></details></div>
            </details>
          </div>
          <details class="spaced" open><summary>ManagedFields :<svg><use href="#i-chev"/></svg></summary>
            <div class="nest entry"><b class="dash">-</b><div class="grow">
              <p><b>APIVersion</b> : v1</p>
              <p><b>FieldsType</b> : FieldsV1</p>
              <details class="spaced"><summary>FieldsV1 :<svg><use href="#i-chev"/></svg></summary></details>
              <p class="spaced"><b>Manager</b> : k3s</p>
              <p><b>Operation</b> : Update</p>
              <details class="spaced"><summary>Time :<svg><use href="#i-chev"/></svg></summary></details>
            </div></div>
          </details>
          <p class="spaced"><b>Name</b> : jaeger-operator-webhook-service</p>
          <p><b>Namespace</b> : observability</p>
          <details><summary>OwnerReferences :<svg><use href="#i-chev"/></svg></summary></details>
          <p><b>ResourceVersion</b> : 44166677</p>
          <p><b>SelfLink</b> :</p>
          <p><b>UID</b> : 9c8d7a83-20f5-474f-b8e5-2d4415bbb803</p>
        </div>
        <details class="spaced" open><summary>Subsets :<svg><use href="#i-chev"/></svg></summary>
          <div class="entry"><b class="dash dash-outer">-</b><div class="grow">
            <details open><summary>Addresses :<svg><use href="#i-chev"/></svg></summary>
              <div class="entry"><b class="dash dash-outer">-</b><div class="grow">
                <p><b>Hostname</b> :</p>
                <p><b>IP</b> : 10.42.1.221</p>
                <p><b>NodeName</b> : kappa1.dev.eti.software</p>
                <details class="spaced" open><summary>TargetRef :<svg><use href="#i-chev"/></svg></summary>
                  <div class="nest">
                    <p><b>APIVersion</b> :</p>
                    <p><b>FieldPath</b> :</p>
                    <p><b>Kind</b> : Pod</p>
                    <p><b>Name</b> : jaeger-operator-64dfbbc469-rzplc</p>
                    <p><b>Namespace</b> : observability</p>
                    <p><b>ResourceVersion</b> : 44166674</p>
                    <p><b>UID</b> : a1b23ccb-fa58-4012-aa7a-f5155530ebb7</p>
                  </div>
                </details>
              </div></div>
            </details>
            <details class="spaced" open><summary>NotReadyAddresses :<svg><use href="#i-chev"/></svg></summary></details>
            <details open><summary>Ports :<svg><use href="#i-chev"/></svg></summary>
              <div class="entry"><b class="dash dash-outer">-</b><div class="grow">
                <p><b>AppProtocol</b> :</p>
                <p><b>Name</b> :</p>
                <p><b>Port</b> : <span class="num">9443</span></p>
                <p><b>Protocol</b> : TCP</p>
              </div></div>
            </details>
          </div></div>
        </details>
        <details class="spaced" open><summary>TypeMeta :<svg><use href="#i-chev"/></svg></summary>
          <div class="nest">
            <p><b>APIVersion</b> :</p>
            <p><b>Kind</b> :</p>
          </div>
        </details>
      </div>
    </aside>
    <div class="scroll"><span class="thumb"></span></div>

    <svg class="callout" viewBox="0 0 3824 1768" preserveAspectRatio="xMinYMin slice" aria-hidden="true"><path d="M786 860L954 776V843L2331 840V874L954 876V944Z" fill="#ff2700"/></svg>
  </main>
</div>
</body>
</html>
```
FILE: styles.css
```css
* { box-sizing: border-box; }
body {
  margin: 0;
  background: #fff;
  font-family: "Liberation Sans", Arial, sans-serif;
  font-size: 28px;
}
button { border: 0; padding: 0; margin: 0; background: none; font: inherit; color: inherit; }
a { text-decoration: none; color: inherit; }
svg { display: block; }
p { margin: 0; }
.defs { position: absolute; width: 0; height: 0; }

.window {
  display: flex;
  flex-direction: column;
  height: calc(100vh - 135px);
  margin: 51px 68px 84px;
  border-radius: 24px;
  overflow: hidden;
  background: #f6f6f6;
  box-shadow: 0 0 2px 1px rgba(0, 0, 0, .25), 0 20px 48px rgba(0, 0, 0, .3);
}

/* browser frame */
.chrome {
  flex: none;
  background: #dde1e8;
  font-family: Inter, Roboto, sans-serif;
  font-size: 24px;
  color: #44474a;
}
.strip { display: flex; height: 81px; padding: 0 12px 0 42px; }
.lights { display: flex; gap: 16px; width: 140px; align-items: center; }
.lights span { width: 24px; height: 24px; border-radius: 50%; background: #d0d3d5; border: 2px solid #bfc2c4; }
.tabs { display: flex; align-items: flex-end; }
.tab {
  position: relative;
  display: flex;
  align-items: center;
  width: 341px;
  height: 68px;
  padding: 0 33px 12px 20px;
}
.tab-active {
  width: 331px;
  margin: 0 8px 0 2px;
  padding: 0 23px 12px 18px;
  border-radius: 20px 20px 0 0;
  background: #fff;
  color: #1f1f1f;
}
.tab-active::before, .tab-active::after {
  content: "";
  position: absolute;
  bottom: 0;
  width: 20px;
  height: 20px;
}
.tab-active::before { left: -20px; background: radial-gradient(circle at 0 0, transparent 19px, #fff 20px); }
.tab-active::after { right: -20px; background: radial-gradient(circle at 100% 0, transparent 19px, #fff 20px); }
.divided::after {
  content: "";
  position: absolute;
  right: -2px;
  top: 12px;
  width: 2px;
  height: 32px;
  background: #b9b8b5;
}
.fav { flex: none; width: 32px; height: 32px; margin-right: 14px; }
.tab-title { flex: 1; overflow: hidden; white-space: nowrap; }
.fade { -webkit-mask-image: linear-gradient(90deg, #000 80%, transparent); mask-image: linear-gradient(90deg, #000 80%, transparent); }
.close { flex: none; width: 18px; height: 18px; margin-left: 24px; }
.close svg { width: 18px; height: 18px; }
.newtab { width: 22px; margin: 0 auto 0 22px; }
.newtab svg { width: 22px; height: 22px; }
.tabsearch {
  display: flex;
  align-items: center;
  justify-content: center;
  width: 56px;
  height: 56px;
  margin-top: 12px;
  border-radius: 18px;
  background: #fff;
}
.tabsearch svg { width: 18px; height: 12px; }

.bars { background: #fff; border-radius: 20px 20px 0 0; border-bottom: 2px solid #e2e3e4; }
.toolbar { display: flex; align-items: center; gap: 37px; padding: 12px 13px 0 28px; }
.icons { display: flex; gap: 40px; }
.ico, .ico svg { flex: none; width: 32px; height: 32px; }
.omnibox {
  flex: 1;
  display: flex;
  align-items: center;
  height: 68px;
  padding: 0 30px 0 9px;
  border-radius: 34px;
  background: #ebeef8;
}
.siteinfo { display: flex; align-items: center; justify-content: center; width: 48px; height: 48px; border-radius: 50%; background: #fff; }
.siteinfo svg { width: 28px; height: 28px; }
.url { flex: 1; border: 0; padding: 0 16px; background: none; font: 28px Inter, Roboto, sans-serif; color: #1f1f1f; }
.vsep { flex: none; width: 2px; height: 32px; background: #c9daf8; }
.pills { display: flex; gap: 11px; margin-left: -9px; font-size: 26px; }
.pill {
  display: flex;
  align-items: center;
  gap: 12px;
  height: 68px;
  padding: 0 20px;
  border-radius: 34px;
  background: #d3e2fd;
}
.pill-wide { padding: 0 28px 0 24px; }
.avatar { width: 40px; height: 40px; border-radius: 50%; background: #5d4037; color: #fff; font-size: 20px; line-height: 40px; text-align: center; }
.dots { width: 8px; height: 32px; margin-left: 8px; fill: #0b2a5c; }

.bookmarks { display: flex; align-items: center; gap: 32px; height: 81px; padding: 0 30px 0 24px; color: #a5a7aa; white-space: nowrap; }
.bookmarks a { display: flex; align-items: center; gap: 13px; }
.bookmarks a svg { width: 32px; height: 32px; }
.bookmarks .all { color: #44474a; gap: 17px; }
.spacer { flex: 1; }
.more svg { width: 20px; height: 18px; }

/* application */
.appbar { flex: none; display: flex; align-items: center; height: 99px; padding: 0 30px 0 60px; color: #337ab7; }
.brand { font-size: 36px; margin-right: 62px; }
.analyzer { font-size: 29px; }
.menu { display: flex; gap: 61px; margin-left: auto; }
.beta { color: #44747f; }
.beta sup { font-size: 21px; line-height: 0; }

.content { position: relative; flex: 1; display: flex; min-height: 0; }
.graph {
  position: relative;
  flex: 2230 1 0;
  margin: 0 30px 18px 0;
  border-radius: 0 8px 8px 0;
  overflow: hidden;
  background: #eee;
}
.canvas { width: 100%; height: 100%; }
.far { fill: none; stroke: #999; stroke-width: 2; }
.near { fill: none; stroke: #b2b2b2; stroke-width: 2; }
.band { fill: none; stroke: rgba(0, 255, 83, .41); stroke-width: 35; }
.link { fill: none; stroke: #3f7799; stroke-width: 2; }
.link path { marker-end: url(#arrow); }
.nodes rect { fill: #3f5585; }
.nodes text { font: 700 20px "DejaVu Sans Mono", monospace; fill: #fff; }

.filter {
  position: absolute;
  left: 0;
  top: 60px;
  display: flex;
  align-items: center;
  justify-content: center;
  width: 72px;
  height: 64px;
  border-radius: 0 6px 6px 0;
  background: #bccbd1;
}
.filter svg { width: 26px; height: 26px; margin-bottom: 4px; }
.tools { position: absolute; left: 60px; bottom: 42px; display: flex; gap: 8px; }
.tools button {
  display: flex;
  align-items: center;
  justify-content: center;
  gap: 8px;
  width: 96px;
  height: 76px;
  border-radius: 8px;
  background: #337ab7;
}
.tools .wide { width: 128px; }
.tools svg { width: 28px; height: 28px; margin-bottom: 4px; }
.tools .sub { width: 22px; height: 22px; margin: 4px 0 0; }
.info {
  position: absolute;
  right: 40px;
  bottom: 22px;
  display: flex;
  flex-direction: column;
  min-width: 640px;
  padding: 20px;
  border-radius: 6px;
  background: #7696cf;
  color: #fff;
  line-height: 40px;
  text-align: right;
}

.panel {
  flex: 1505 1 0;
  display: flex;
  flex-direction: column;
  justify-content: flex-end;
  margin-right: 30px;
  overflow: hidden;
  background: #eee;
  color: #444;
}
.tree { padding: 0 34px 51px 31px; }
.tree p { height: 44px; line-height: 44px; }
.tree b { color: #000; }
summary { display: flex; justify-content: space-between; align-items: center; height: 42px; color: #000; font-weight: 700; list-style: none; }
summary::-webkit-details-marker { display: none; }
summary svg { width: 26px; height: 18px; transform: rotate(-90deg); }
details[open] > summary svg { transform: none; }
.nest { padding-left: 40px; }
.tree .spaced, .entry { margin-top: 10px; }
.entry { display: flex; }
.dash { flex: none; width: 40px; line-height: 44px; }
.dash-outer { width: 80px; padding-left: 40px; line-height: 42px; }
.grow { flex: 1; }
.num { color: #1a1aff; }

.scroll { flex: none; display: flex; align-items: flex-end; justify-content: center; width: 29px; padding-bottom: 11px; border-left: 2px solid #e9e9e9; background: #fafafa; }
.thumb { width: 16px; height: 48%; border-radius: 8px; background: #c1c1c1; }
.callout { position: absolute; inset: 0; width: 100%; height: 100%; pointer-events: none; }
```
